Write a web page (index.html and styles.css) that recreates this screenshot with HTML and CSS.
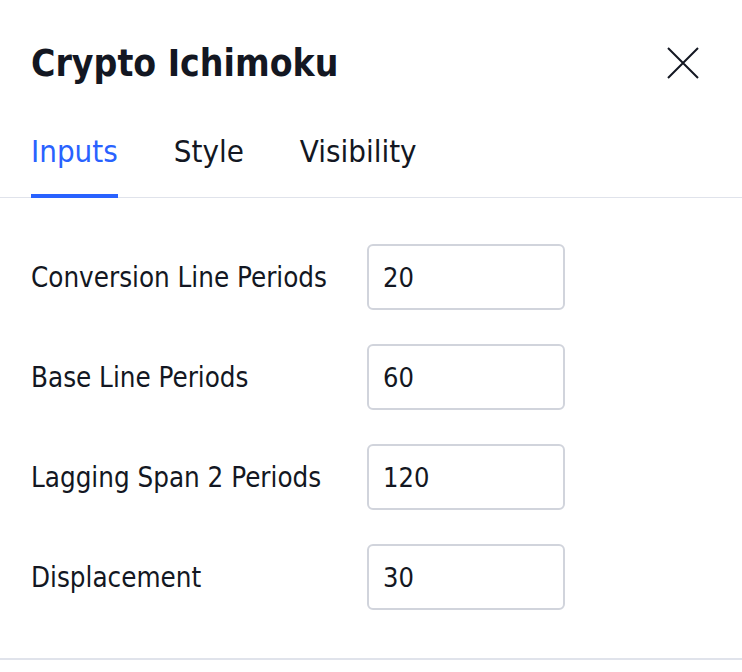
FILE: index.html
```html
<!DOCTYPE html>
<html lang="en">
<head>
    <meta charset="UTF-8">
    <title>Crypto Ichimoku</title>
    <link rel="stylesheet" href="styles.css">
</head>
<body>
    <div class="dialog">
        <div class="header">
            <h2>Crypto Ichimoku</h2>
            <button class="close" title="Close">
                <svg width="34" height="34" viewBox="0 0 34 34">
                    <path d="M2 2 L32 32 M32 2 L2 32" stroke="#131722" stroke-width="2" fill="none"/>
                </svg>
            </button>
        </div>
        <div class="tabs">
            <div class="tab active">Inputs</div>
            <div class="tab">Style</div>
            <div class="tab">Visibility</div>
        </div>
        <div class="content">
            <div class="row">
                <label for="conv">Conversion Line Periods</label>
                <input type="text" id="conv" value="20">
            </div>
            <div class="row">
                <label for="base">Base Line Periods</label>
                <input type="text" id="base" value="60">
            </div>
            <div class="row">
                <label for="lag">Lagging Span 2 Periods</label>
                <input type="text" id="lag" value="120">
            </div>
            <div class="row">
                <label for="disp">Displacement</label>
                <input type="text" id="disp" value="30">
            </div>
        </div>
    </div>
</body>
</html>
```

FILE: styles.css
```css
body {
    margin: 0;
    font-family: "DejaVu Sans Condensed", "DejaVu Sans", sans-serif;
    background-color: #ffffff;
    color: #131722;
}

.dialog {
    width: 742px;
}

.header {
    display: flex;
    justify-content: space-between;
    align-items: center;
    padding: 40px 42px 0 31px;
    height: 46px;
}

h2 {
    margin: 0;
    font-size: 37px;
    font-weight: 700;
}

.close {
    background: none;
    border: none;
    padding: 0;
    width: 34px;
    height: 34px;
    cursor: pointer;
}

.tabs {
    display: flex;
    gap: 56px;
    padding: 0 31px;
    margin-top: 47px;
    border-bottom: 1px solid #e0e3eb;
}

.tab {
    font-size: 31px;
    padding-bottom: 25px;
    border-bottom: 4px solid transparent;
    margin-bottom: -1px;
}

.tab.active {
    color: #2962ff;
    border-bottom-color: #2962ff;
}

.content {
    padding: 46px 31px 48px;
    display: flex;
    flex-direction: column;
    gap: 34px;
    border-bottom: 2px solid #e0e3eb;
}

.row {
    display: flex;
    align-items: center;
}

label {
    width: 336px;
    font-size: 27.5px;
}

input[type="text"] {
    width: 198px;
    height: 66px;
    box-sizing: border-box;
    border: 2px solid #d1d4dc;
    border-radius: 6px;
    padding: 0 14px;
    font-family: "DejaVu Sans Condensed", "DejaVu Sans", sans-serif;
    font-size: 27px;
    color: #131722;
}
```
